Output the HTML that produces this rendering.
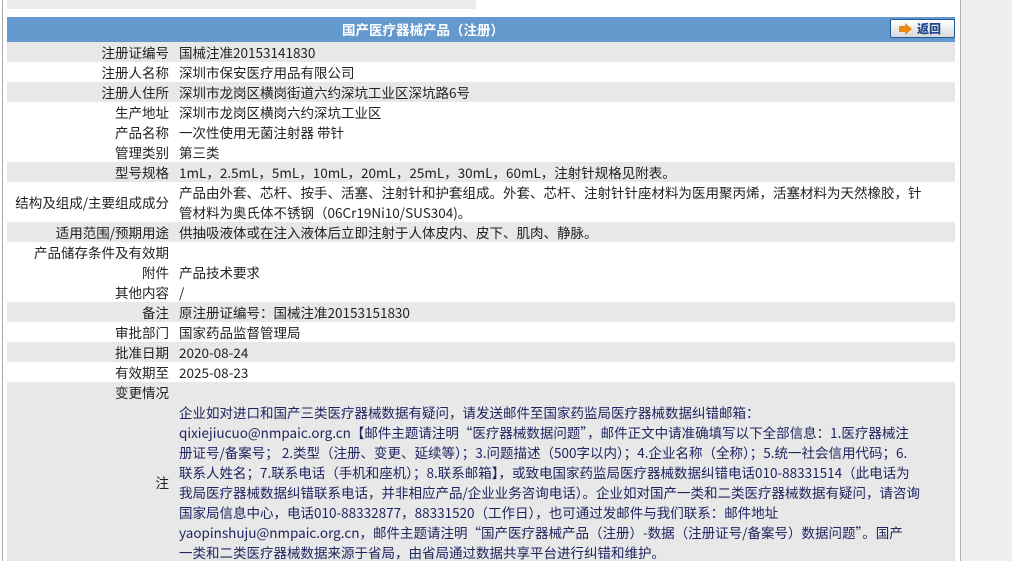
<!DOCTYPE html>
<html><head><meta charset="utf-8"><style>
*{margin:0;padding:0;box-sizing:border-box}
body{width:1012px;height:561px;overflow:hidden;background:#fff;font-family:"Noto Sans CJK SC","Liberation Sans",sans-serif;font-size:13.5px;color:#222;position:relative}
.lb{position:absolute;left:2px;top:0;width:1px;height:561px;background:#aaa}
.rb{position:absolute;left:960px;top:0;width:52px;height:561px;background:#efefef;border-left:1px solid #b0b0b0}
.top{position:absolute;left:7px;top:0;width:469px;height:9px;background:#ebebeb}
.hd{position:absolute;left:7px;top:17px;width:948px;height:25px;background:#6399cc}
.hd span{position:absolute;left:335px;top:2px;color:#fff;font-weight:bold;font-size:13.5px;line-height:21px}
.btn{position:absolute;left:890px;top:19px;width:65px;height:19px;border:1px solid #1e5a9c;border-radius:2px;background:linear-gradient(#fff,#d8d8d8);font-size:12px;font-weight:bold;color:#1e4a8c}
.btn i{position:absolute;left:14px;top:3px;width:0;height:0;border-left:7px solid #e88a0c;border-top:6px solid transparent;border-bottom:6px solid transparent}
.btn i:before{content:"";position:absolute;left:-13px;top:-3px;width:6px;height:6px;background:#e88a0c}
.btn b{position:absolute;left:26px;top:0;line-height:17px}
.r{position:absolute;left:7px;width:948px;height:20px;line-height:20px}
.g{background:#e8e8e8}
.l{position:absolute;right:786px;top:0;white-space:nowrap;text-align:right}
.v{position:absolute;left:172px;top:0;white-space:nowrap}
.n{color:#1f2460}
</style></head><body>
<div class="lb"></div><div class="rb"></div>
<div class="top"></div>
<div class="hd"><span>国产医疗器械产品（注册）</span></div>
<div class="btn"><i></i><b>返回</b></div>

<div class="r g" style="top:42px"><span class="l">注册证编号</span><span class="v">国械注准20153141830</span></div>
<div class="r" style="top:62px"><span class="l">注册人名称</span><span class="v">深圳市保安医疗用品有限公司</span></div>
<div class="r g" style="top:82px"><span class="l">注册人住所</span><span class="v">深圳市龙岗区横岗街道六约深坑工业区深坑路6号</span></div>
<div class="r" style="top:102px"><span class="l">生产地址</span><span class="v">深圳市龙岗区横岗六约深坑工业区</span></div>
<div class="r" style="top:122px"><span class="l">产品名称</span><span class="v">一次性使用无菌注射器 带针</span></div>
<div class="r" style="top:142px"><span class="l">管理类别</span><span class="v">第三类</span></div>
<div class="r g" style="top:162px"><span class="l">型号规格</span><span class="v">1mL，2.5mL，5mL，10mL，20mL，25mL，30mL，60mL，注射针规格见附表。</span></div>
<div class="r" style="top:182px;height:40px"><span class="l" style="top:10px">结构及组成/主要组成成分</span><span class="v">产品由外套、芯杆、按手、活塞、注射针和护套组成。外套、芯杆、注射针针座材料为医用聚丙烯，活塞材料为天然橡胶，针<br>管材料为奥氏体不锈钢（06Cr19Ni10/SUS304)。</span></div>
<div class="r g" style="top:222px"><span class="l">适用范围/预期用途</span><span class="v">供抽吸液体或在注入液体后立即注射于人体皮内、皮下、肌肉、静脉。</span></div>
<div class="r" style="top:242px"><span class="l">产品储存条件及有效期</span></div>
<div class="r" style="top:262px"><span class="l">附件</span><span class="v">产品技术要求</span></div>
<div class="r" style="top:282px"><span class="l">其他内容</span><span class="v">/</span></div>
<div class="r g" style="top:302px"><span class="l">备注</span><span class="v">原注册证编号：国械注准20153151830</span></div>
<div class="r" style="top:322px"><span class="l">审批部门</span><span class="v">国家药品监督管理局</span></div>
<div class="r g" style="top:342px"><span class="l">批准日期</span><span class="v">2020-08-24</span></div>
<div class="r" style="top:362px"><span class="l">有效期至</span><span class="v">2025-08-23</span></div>
<div class="r g" style="top:382px;height:179px"><span class="l">变更情况</span>
<span class="l" style="top:90px">注</span>
<span class="v n" style="top:20px">企业如对进口和国产三类医疗器械数据有疑问，请发送邮件至国家药监局医疗器械数据纠错邮箱：<br>qixiejiucuo@nmpaic.org.cn【邮件主题请注明“医疗器械数据问题”，邮件正文中请准确填写以下全部信息：1.医疗器械注<br>册证号/备案号； 2.类型（注册、变更、延续等）；3.问题描述（500字以内）；4.企业名称（全称）；5.统一社会信用代码；6.<br>联系人姓名；7.联系电话（手机和座机）；8.联系邮箱】，或致电国家药监局医疗器械数据纠错电话010-88331514（此电话为<br>我局医疗器械数据纠错联系电话，并非相应产品/企业业务咨询电话）。企业如对国产一类和二类医疗器械数据有疑问，请咨询<br>国家局信息中心，电话010-88332877，88331520（工作日），也可通过发邮件与我们联系：邮件地址<br>yaopinshuju@nmpaic.org.cn，邮件主题请注明“国产医疗器械产品（注册）-数据（注册证号/备案号）数据问题”。国产<br>一类和二类医疗器械数据来源于省局，由省局通过数据共享平台进行纠错和维护。</span></div>
</body></html>
